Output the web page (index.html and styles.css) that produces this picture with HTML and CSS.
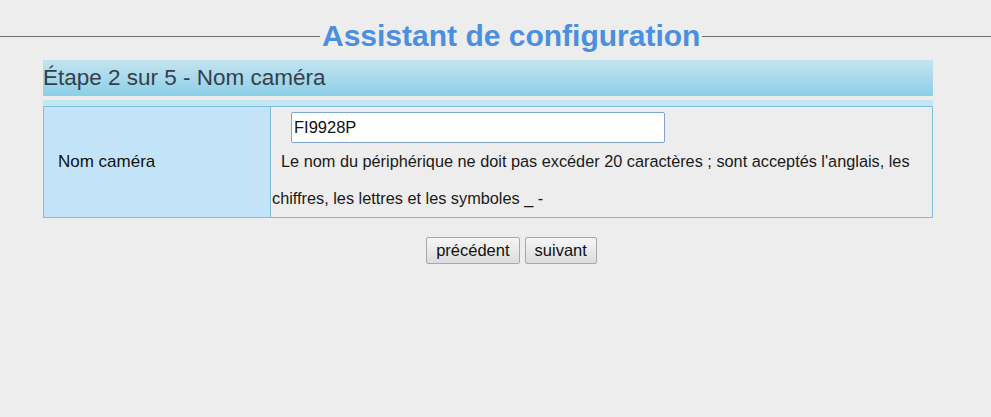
FILE: index.html
```html
<!DOCTYPE html>
<html lang="fr">
<head>
<meta charset="utf-8">
<title>Assistant de configuration</title>
<link rel="stylesheet" href="styles.css">
</head>
<body>
<div class="title-row">
  <span class="rule rule-left"></span>
  <h1 class="title">Assistant de configuration</h1>
  <span class="rule"></span>
</div>
<div class="panel">
  <div class="step-bar">Étape 2 sur 5 - Nom caméra</div>
  <div class="strip"></div>
  <div class="form-table">
    <div class="label-cell">Nom caméra</div>
    <div class="value-cell">
      <input class="name-input" type="text" value="FI9928P">
      <p class="help">&nbsp;&nbsp;Le nom du périphérique ne doit pas excéder 20 caractères ; sont acceptés l'anglais, les chiffres, les lettres et les symboles _ -</p>
    </div>
  </div>
  <div class="buttons">
    <button class="btn">précédent</button>
    <button class="btn">suivant</button>
  </div>
</div>
</body>
</html>
```
FILE: styles.css
```css
html, body {
  margin: 0;
  padding: 0;
  background: #ededed;
  font-family: "Liberation Sans", Arial, sans-serif;
  color: #222;
}
.title-row {
  display: flex;
  align-items: center;
  padding-top: 17px;
  height: 38px;
}
.rule {
  flex: 1;
  height: 1px;
  background: #6e6e6e;
}
.rule-left {
  flex: 0 0 320px;
}
.title {
  margin: 0 2px;
  font-size: 30px;
  font-weight: bold;
  color: #4a8fe0;
  line-height: 38px;
}
.panel {
  width: 890px;
  margin: 5px 0 0 43px;
}
.step-bar {
  height: 36px;
  line-height: 36px;
  font-size: 22.5px;
  color: #363f4b;
  background: linear-gradient(#c4e4ef, #8ccfe8);
}
.strip {
  height: 6px;
  margin-top: 4px;
  background: #c2e6f2;
}
.form-table {
  display: grid;
  grid-template-columns: 227px 1fr;
  border: 1px solid #7cbfd9;
}
.label-cell {
  background: #c3e4f8;
  border-right: 1px solid #7cbfd9;
  display: flex;
  align-items: center;
  padding-left: 14px;
  font-size: 17px;
  color: #111;
}
.value-cell {
  padding-top: 5px;
}
.name-input {
  display: block;
  margin-left: 20px;
  width: 374px;
  height: 31px;
  box-sizing: border-box;
  border: 1px solid #7da4d2;
  border-radius: 2px;
  background: #fff;
  font-family: "Liberation Sans", Arial, sans-serif;
  font-size: 16.5px;
  padding: 0 2px;
  color: #111;
  outline: none;
}
.help {
  margin: 0;
  padding: 0 12px 0 1px;
  font-size: 16.3px;
  line-height: 37px;
  color: #1a1a1a;
}
.buttons {
  display: flex;
  justify-content: center;
  gap: 5px;
  margin-top: 19px;
  padding-left: 47px;
}
.btn {
  font-family: "Liberation Sans", Arial, sans-serif;
  font-size: 16.5px;
  height: 27px;
  padding: 0 9px;
  background: linear-gradient(#f6f6f6, #dcdcdc);
  border: 1px solid #a8a8a8;
  border-radius: 2px;
  color: #111;
}
```
